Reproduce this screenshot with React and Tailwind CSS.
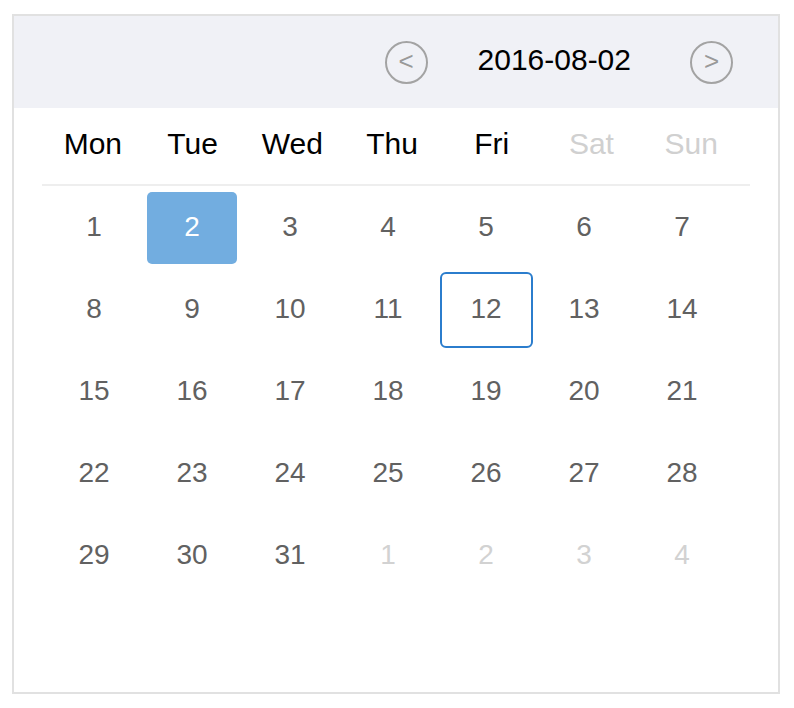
import React from 'react';

const weekdays = [
  { label: 'Mon' },
  { label: 'Tue' },
  { label: 'Wed' },
  { label: 'Thu' },
  { label: 'Fri' },
  { label: 'Sat', off: true },
  { label: 'Sun', off: true },
];

// August 2016 starts on a Monday; trailing days come from September
const days = [
  ...Array.from({ length: 31 }, (_, i) => ({ n: i + 1 })),
  ...[1, 2, 3, 4].map((n) => ({ n, other: true })),
];

function NavButton({ children }) {
  return (
    <button className="w-[43px] h-[43px] rounded-full border-2 border-[#a3a3a3] flex items-center justify-center text-[26px] leading-none text-[#999] pb-[2px]">
      {children}
    </button>
  );
}

function DayCell({ day }) {
  const selected = !day.other && day.n === 2;
  const today = !day.other && day.n === 12;

  return (
    <div className="h-[82px] flex items-center justify-center">
      <div
        className={`flex items-center justify-center text-[28px] pb-[2px] ${
          selected
            ? 'w-[90px] h-[72px] rounded-[5px] bg-[#72ade0] text-white'
            : today
            ? 'w-[93px] h-[76px] rounded-[6px] border-2 border-[#2b7dcd] text-[#616161]'
            : day.other
            ? 'text-[#d2d2d2]'
            : 'text-[#616161]'
        }`}
      >
        {day.n}
      </div>
    </div>
  );
}

export default function App() {
  return (
    <div className="w-[794px] h-[708px] bg-white pt-[14px] pl-[12px] font-['Liberation_Sans',Arial,sans-serif]">
      <div className="w-[768px] h-[680px] border-2 border-[#e1e1e1] flex flex-col">
        {/* Header */}
        <div className="h-[92px] bg-[#f0f1f6] flex items-center justify-end pr-[45px]">
          <NavButton>&lt;</NavButton>
          <span className="ml-[50px] mr-[59px] pb-[6px] text-[30px] text-black">2016-08-02</span>
          <NavButton>&gt;</NavButton>
        </div>

        <div className="mx-[28px]">
          {/* Weekdays */}
          <div className="h-[76px] ml-[1px] w-[698px] grid grid-cols-7 items-center pb-[6px]">
            {weekdays.map((d) => (
              <div
                key={d.label}
                className={`text-center text-[30px] ${d.off ? 'text-[#d0d0d0]' : 'text-black'}`}
              >
                {d.label}
              </div>
            ))}
          </div>
          <div className="h-[2px] bg-[#eeeeee]" />

          {/* Days */}
          <div className="ml-[3px] mt-[1px] w-[686px] grid grid-cols-7">
            {days.map((d, i) => (
              <DayCell key={i} day={d} />
            ))}
          </div>
        </div>
      </div>
    </div>
  );
}
